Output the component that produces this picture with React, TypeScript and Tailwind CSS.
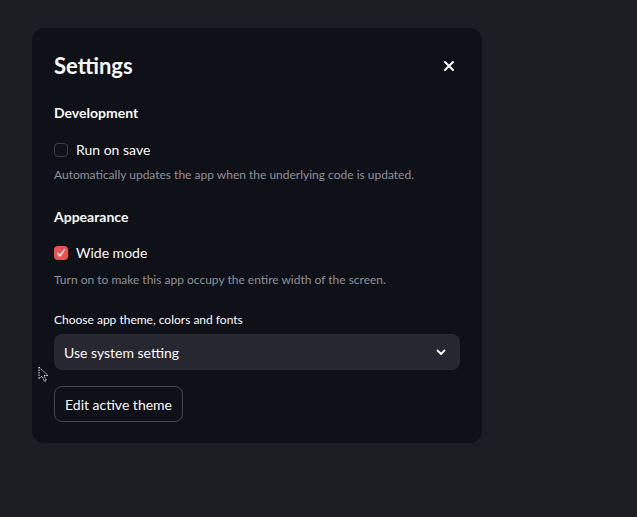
import React from "react";

function Check({ checked }: { checked: boolean }) {
  if (checked) {
    return (
      <span className="flex h-[14px] w-[14px] items-center justify-center rounded-[4px] bg-[#ff4b4b]">
        <svg width="10" height="10" viewBox="0 0 10 10" fill="none">
          <path d="M1.8 5.4 L4 8 L8.4 1.6" stroke="white" strokeWidth="1.6" strokeLinecap="round" strokeLinejoin="round" />
        </svg>
      </span>
    );
  }
  return <span className="block h-[14px] w-[14px] rounded-[4px] border border-[#3d4049]" />;
}

export default function App() {
  return (
    <div
      className="relative min-h-[517px] w-full bg-[#1d1e23] pl-[32px] pt-[28px]"
      style={{ fontFamily: "'Lato', 'Noto Sans', sans-serif" }}
    >
      <div className="w-[450px] rounded-[12px] bg-[#0e1117] px-[22px] pb-[21px] pt-[20px] text-[#fafafa]">
        <div className="flex h-[36px] items-center justify-between">
          <h1 className="text-[22px] font-bold leading-[36px]">Settings</h1>
          <svg width="12" height="12" viewBox="0 0 12 12" className="mr-[5px]">
            <path d="M2 2 L10 10 M10 2 L2 10" stroke="#fafafa" strokeWidth="2" strokeLinecap="round" />
          </svg>
        </div>
        <div className="mt-[19px] text-[14px] font-bold leading-[20px]">Development</div>
        <div className="mt-[17px] flex h-[20px] items-center gap-[8px]">
          <Check checked={false} />
          <span className="text-[14px] leading-[20px]">Run on save</span>
        </div>
        <div className="mt-[7px] text-[12px] leading-[16px] text-[#909296]">
          Automatically updates the app when the underlying code is updated.
        </div>
        <div className="mt-[24px] text-[14px] font-bold leading-[20px]">Appearance</div>
        <div className="mt-[16px] flex h-[20px] items-center gap-[8px]">
          <Check checked={true} />
          <span className="text-[14px] leading-[20px]">Wide mode</span>
        </div>
        <div className="mt-[9px] text-[12px] leading-[16px] text-[#909296]">
          Turn on to make this app occupy the entire width of the screen.
        </div>
        <div className="mt-[24px] text-[12px] leading-[16px] text-[#fafafa]">
          Choose app theme, colors and fonts
        </div>
        <div className="mt-[6px] flex h-[36px] items-center justify-between rounded-[8px] bg-[#262730] pl-[10px] pr-[13px]">
          <span className="text-[14px]">Use system setting</span>
          <svg width="12" height="12" viewBox="0 0 12 12" fill="none">
            <path d="M2.5 4.5 L6 8 L9.5 4.5" stroke="#fafafa" strokeWidth="1.8" strokeLinecap="round" strokeLinejoin="round" />
          </svg>
        </div>
        <button className="mt-[16px] flex h-[36px] items-center rounded-[8px] border border-[#43464f] px-[10px] text-[14px] text-[#fafafa]">
          Edit active theme
        </button>
      </div>
      <svg className="absolute left-[38px] top-[366px]" width="12" height="18" viewBox="0 0 12 18" fill="none">
        <path d="M1 1 L1 13 L4 10 L6.5 15.5 L8.5 14.5 L6 9.5 L10 9.5 Z" fill="#0e1117" stroke="#e8e8e8" strokeWidth="1" strokeDasharray="1.5 1" />
      </svg>
    </div>
  );
}
